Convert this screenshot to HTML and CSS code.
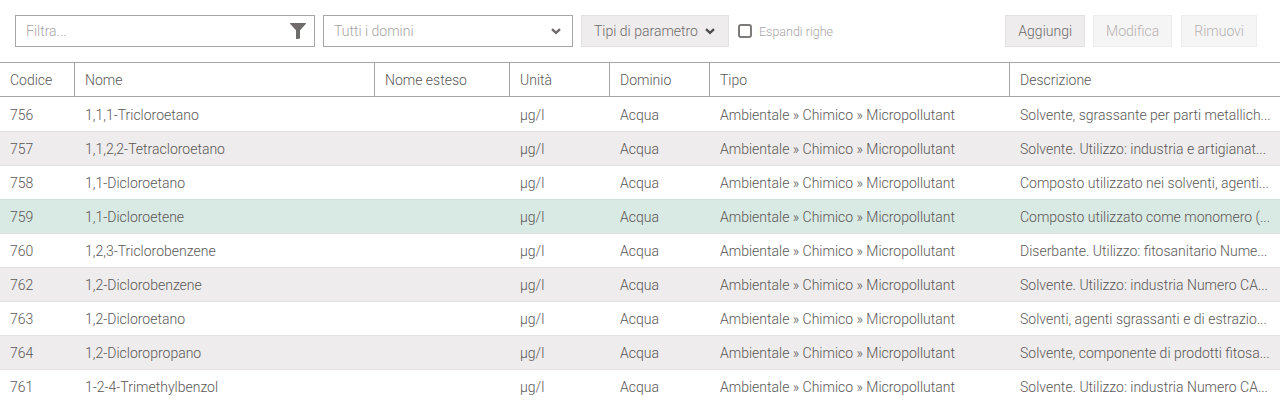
FILE: index.html
```html
<!DOCTYPE html>
<html lang="it">
<head>
    <meta charset="UTF-8">
    <title>Parametri</title>
    <link rel="stylesheet" href="styles.css">
</head>
<body>
    <div class="toolbar">
        <div class="field filter-field">
            <span class="placeholder">Filtra...</span>
            <svg class="filter-icon" width="16" height="16" viewBox="0 0 16 16"><path d="M.6 0h14.8c.5 0 .8.6.4 1L10 7.2v7.3c0 .5-.1.8-.5 1.2L6.6 16c-.3 0-.6-.2-.6-.6V7.2L.2 1C-.2.6.1 0 .6 0z"/></svg>
        </div>
        <div class="field domain-field">
            <span class="placeholder">Tutti i domini</span>
            <svg class="chevron light" width="12" height="8" viewBox="0 0 12 8"><path d="M2 2.2L6 5.8l4-3.6"/></svg>
        </div>
        <button class="btn type-btn">Tipi di parametro
            <svg class="chevron" width="12" height="8" viewBox="0 0 12 8"><path d="M2 2.2L6 5.8l4-3.6"/></svg>
        </button>
        <label class="expand">
            <span class="checkbox"></span>
            Espandi righe
        </label>
        <div class="actions">
            <button class="btn add-btn">Aggiungi</button>
            <button class="btn disabled">Modifica</button>
            <button class="btn disabled">Rimuovi</button>
        </div>
    </div>

    <table class="grid">
        <colgroup>
            <col class="c-code"><col class="c-name"><col class="c-long"><col class="c-unit">
            <col class="c-domain"><col class="c-type"><col class="c-desc">
        </colgroup>
        <thead>
            <tr>
                <th>Codice</th><th>Nome</th><th>Nome esteso</th><th>Unità</th>
                <th>Dominio</th><th>Tipo</th><th>Descrizione</th>
            </tr>
        </thead>
        <tbody>
            <tr><td>756</td><td>1,1,1-Tricloroetano</td><td></td><td>µg/l</td><td>Acqua</td><td>Ambientale » Chimico » Micropollutant</td><td>Solvente, sgrassante per parti metallich...</td></tr>
            <tr><td>757</td><td>1,1,2,2-Tetracloroetano</td><td></td><td>µg/l</td><td>Acqua</td><td>Ambientale » Chimico » Micropollutant</td><td>Solvente. Utilizzo: industria e artigianat...</td></tr>
            <tr><td>758</td><td>1,1-Dicloroetano</td><td></td><td>µg/l</td><td>Acqua</td><td>Ambientale » Chimico » Micropollutant</td><td>Composto utilizzato nei solventi, agenti...</td></tr>
            <tr class="selected"><td>759</td><td>1,1-Dicloroetene</td><td></td><td>µg/l</td><td>Acqua</td><td>Ambientale » Chimico » Micropollutant</td><td>Composto utilizzato come monomero (...</td></tr>
            <tr><td>760</td><td>1,2,3-Triclorobenzene</td><td></td><td>µg/l</td><td>Acqua</td><td>Ambientale » Chimico » Micropollutant</td><td>Diserbante. Utilizzo: fitosanitario Nume...</td></tr>
            <tr><td>762</td><td>1,2-Diclorobenzene</td><td></td><td>µg/l</td><td>Acqua</td><td>Ambientale » Chimico » Micropollutant</td><td>Solvente. Utilizzo: industria Numero CA...</td></tr>
            <tr><td>763</td><td>1,2-Dicloroetano</td><td></td><td>µg/l</td><td>Acqua</td><td>Ambientale » Chimico » Micropollutant</td><td>Solventi, agenti sgrassanti e di estrazio...</td></tr>
            <tr><td>764</td><td>1,2-Dicloropropano</td><td></td><td>µg/l</td><td>Acqua</td><td>Ambientale » Chimico » Micropollutant</td><td>Solvente, componente di prodotti fitosa...</td></tr>
            <tr><td>761</td><td>1-2-4-Trimethylbenzol</td><td></td><td>µg/l</td><td>Acqua</td><td>Ambientale » Chimico » Micropollutant</td><td>Solvente. Utilizzo: industria Numero CA...</td></tr>
        </tbody>
    </table>
</body>
</html>
```

FILE: styles.css
```css
/* General Styles */
html, body {
    height: 100%;
    overflow: hidden;
}
body {
    margin: 0;
    font-family: Roboto, sans-serif;
    font-weight: 300;
    font-size: 14px;
    color: #5a5757;
    background: white;
}

/* Toolbar */
.toolbar {
    display: flex;
    align-items: center;
    height: 32px;
    padding: 15px 23px 15px 15px;
}
.field {
    box-sizing: border-box;
    display: flex;
    align-items: center;
    justify-content: space-between;
    height: 32px;
    padding: 0 10px;
    border: 1px solid #a8a5a5;
    background: white;
}
.filter-field {
    width: 300px;
    padding-right: 8px;
    margin-right: 8px;
}
.domain-field {
    width: 250px;
    padding-right: 10px;
    margin-right: 8px;
}
.placeholder {
    color: #a8a5a5;
}
.filter-icon {
    fill: #6f6b6b;
}
.chevron {
    fill: none;
    stroke: #514e4e;
    stroke-width: 2.4;
}
.chevron.light {
    stroke: #6f6b6b;
}
.btn {
    box-sizing: border-box;
    height: 32px;
    padding: 0 12px;
    font: inherit;
    color: #6f6b6b;
    background: #eeecec;
    border: 1px solid #e2e0e0;
}
.btn.disabled {
    color: #b5b2b2;
    background: #f6f5f5;
    border-color: #eeecec;
}
.add-btn {
    margin-right: -1px;
}
.type-btn {
    display: flex;
    align-items: center;
    gap: 6px;
    margin-right: 9px;
}
.expand {
    display: flex;
    align-items: center;
    gap: 7px;
    font-size: 12.5px;
    color: #a8a5a5;
}
.checkbox {
    box-sizing: border-box;
    width: 14px;
    height: 14px;
    border: 2px solid #7d7a7a;
    border-radius: 3px;
}
.actions {
    display: flex;
    gap: 9px;
    margin-left: auto;
}

/* Table */
.grid {
    width: 1280px;
    table-layout: fixed;
    border-collapse: separate;
    border-spacing: 0;
}
.c-code { width: 75px; }
.c-name { width: 300px; }
.c-long { width: 135px; }
.c-unit { width: 100px; }
.c-domain { width: 100px; }
.c-type { width: 300px; }
.grid th {
    box-sizing: border-box;
    height: 35px;
    padding: 0 10px;
    font-weight: 300;
    text-align: left;
    border-top: 1px solid #a8a5a5;
    border-bottom: 1px solid #a8a5a5;
    border-right: 1px solid #a8a5a5;
}
.grid th:last-child {
    border-right: none;
}
.grid td {
    box-sizing: border-box;
    height: 34px;
    padding: 0 10px;
    white-space: nowrap;
    overflow: hidden;
    border-top: 1px solid #e2e0e0;
}
.grid tbody tr:first-child td {
    border-top-color: transparent;
}
.grid tbody tr:nth-child(even) {
    background: #eeecec;
}
.grid tbody tr.selected {
    background: #d9e9e3;
}
.grid tbody tr.selected td {
    border-top-color: #cfe0da;
}
```
